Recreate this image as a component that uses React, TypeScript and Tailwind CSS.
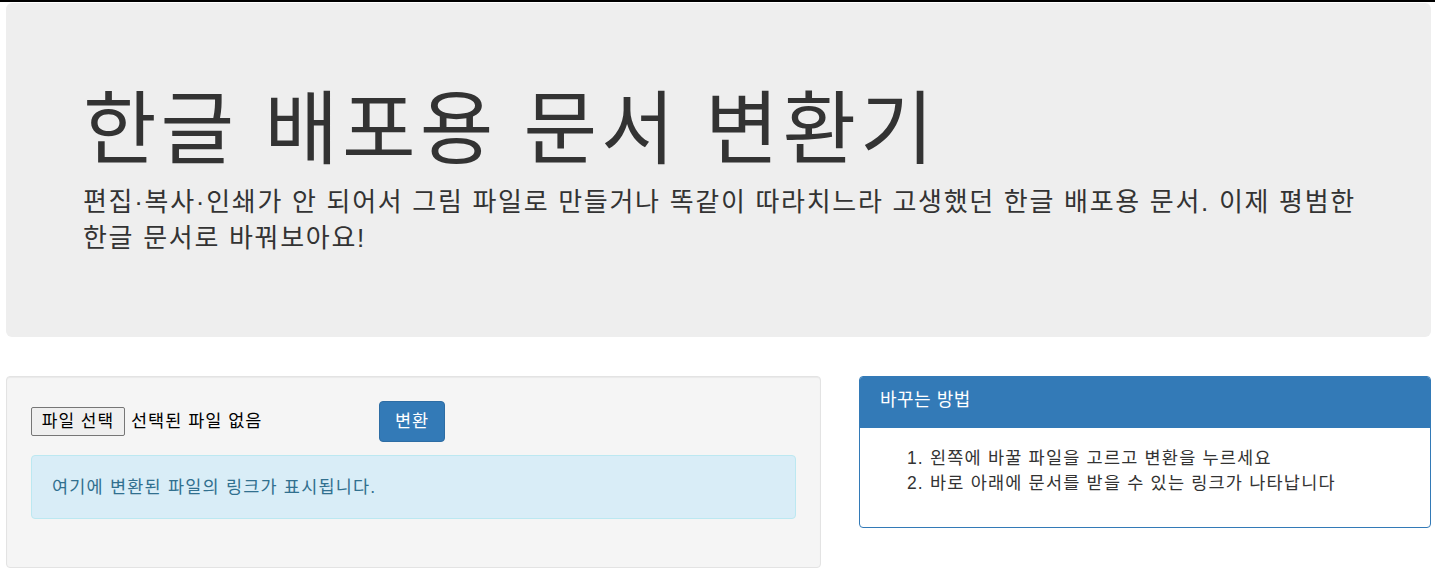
export default function App() {
  return (
    <div className="min-h-[583px] bg-white font-['Liberation_Sans','Noto_Sans_CJK_KR',sans-serif] text-[#333]">
      <div className="h-[2px] bg-black" />

      {/* jumbotron */}
      <div className="ml-[6px] mt-px h-[334px] w-[1425px] rounded-[6px] bg-[#eeeeee] pl-[77px] pr-[40px] pt-[83px]">
        <h1 className="text-[80px] leading-[88px] font-normal tracking-[4px]">한글 배포용 문서 변환기</h1>
        <p className="mt-[10px] text-[26px] leading-[36px] tracking-[1.7px]">
          편집·복사·인쇄가 안 되어서 그림 파일로 만들거나 똑같이 따라치느라 고생했던 한글 배포용 문서. 이제 평범한
          <br />
          한글 문서로 바꿔보아요!
        </p>
      </div>

      <div className="ml-[6px] mt-[39px] flex items-start gap-[38px]">
        {/* converter well */}
        <div className="h-[192px] w-[815px] shrink-0 rounded-[4px] border border-[#e3e3e3] bg-[#f5f5f5] px-[24px] pt-[24px] shadow-[inset_0_1px_1px_rgba(0,0,0,0.05)]">
          <div className="flex items-center">
            <div className="flex w-[348px] items-center">
              <button
                type="button"
                className="h-[29px] w-[94px] rounded-[2px] border border-[#767676] bg-[#efefef] text-[17px] leading-[27px] tracking-[1px] text-black"
              >
                파일 선택
              </button>
              <span className="ml-[6px] text-[17.5px] tracking-[1px] text-black">선택된 파일 없음</span>
            </div>
            <button
              type="button"
              className="h-[41px] w-[66px] rounded-[4px] border border-[#2e6da4] bg-[#337ab7] text-[17.5px] tracking-[1px] text-white"
            >
              변환
            </button>
          </div>
          <div className="mt-[13px] h-[64px] rounded-[4px] border border-[#bce8f1] bg-[#d9edf7] px-[20px] text-[17.5px] leading-[62px] tracking-[1.2px] text-[#31708f]">
            여기에 변환된 파일의 링크가 표시됩니다.
          </div>
        </div>

        {/* how-to panel */}
        <div className="w-[572px] shrink-0 overflow-hidden rounded-[4px] border border-[#337ab7] bg-white">
          <div className="h-[51px] bg-[#337ab7] px-[20px] text-[18px] leading-[46px] tracking-[0.5px] text-white">
            바꾸는 방법
          </div>
          <ol className="list-decimal pb-[31px] pl-[70px] pt-[18px] text-[17.5px] leading-[25px] tracking-[1.2px] text-[#333]">
            <li>왼쪽에 바꿀 파일을 고르고 변환을 누르세요</li>
            <li>바로 아래에 문서를 받을 수 있는 링크가 나타납니다</li>
          </ol>
        </div>
      </div>
    </div>
  )
}
